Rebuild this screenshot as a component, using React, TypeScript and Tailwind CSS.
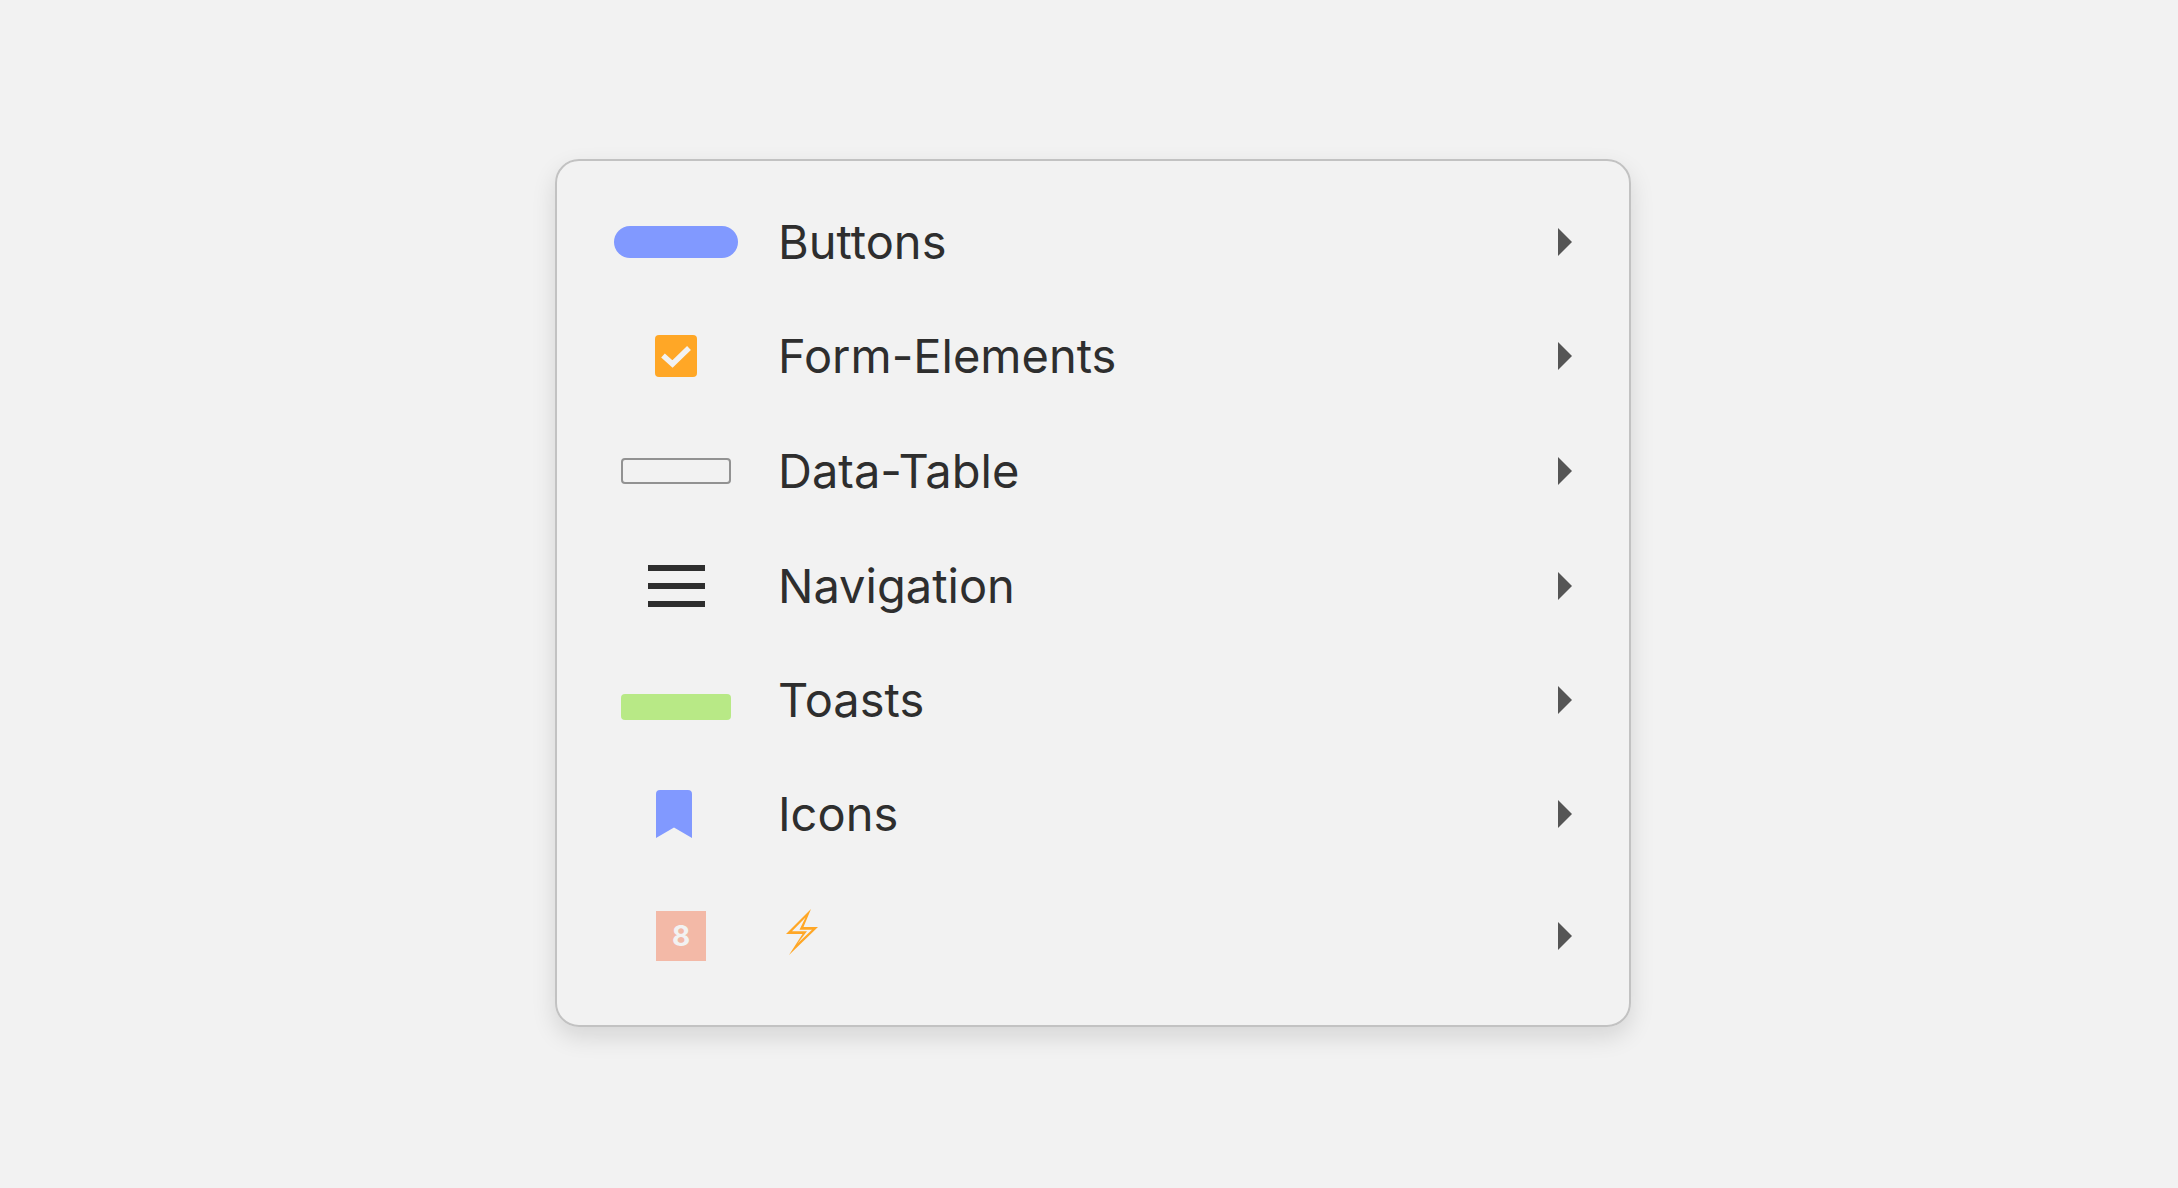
import React from 'react';

interface MenuItem {
	label: string;
	icon: React.ReactNode;
	content?: React.ReactNode;
	rowClass?: string;
}

const CheckIcon = () => (
	<svg width="42" height="42" viewBox="0 0 42 42" aria-hidden="true">
		<rect width="42" height="42" rx="4" fill="#ffa726" />
		<path d="M8 20.5L17.5 29L34 13" fill="none" stroke="#f2f2f2" strokeWidth="5.5" />
	</svg>
);

const MenuIcon = () => (
	<svg width="57" height="42" viewBox="0 0 57 42" fill="#2e2e2e" aria-hidden="true">
		<rect width="57" height="6" />
		<rect y="18" width="57" height="6" />
		<rect y="36" width="57" height="6" />
	</svg>
);

const BookmarkIcon = () => (
	<svg width="40" height="48" viewBox="0 0 40 48" fill="#8199ff" aria-hidden="true">
		<path d="M0 48V4a4 4 0 0 1 4-4h28a4 4 0 0 1 4 4v44L18 37.5z" />
	</svg>
);

const BoltIcon = () => (
	<svg width="44" height="56" viewBox="0 0 44 56" fill="#ffa726" aria-hidden="true">
		<path
			fillRule="evenodd"
			d="M33 1L8 26H24.5L11 47L40 19H25.5zM27.5 9.5L14 23.300H29L19.500 35.500L34 21.700H21.500z"
		/>
	</svg>
);

const Arrow = () => (
	<svg width="14" height="28" viewBox="0 0 14 28" fill="#555555" aria-hidden="true">
		<path d="M0 0L14 14L0 28z" />
	</svg>
);

const items: MenuItem[] = [
	{ label: 'Buttons', icon: <span className="h-8 w-full rounded-full bg-[#8199ff]" /> },
	{ label: 'Form-Elements', icon: <CheckIcon /> },
	{
		label: 'Data-Table',
		icon: <span className="h-[26px] w-[110px] rounded border-2 border-[#929292]" />,
		rowClass: 'h-[116px]',
	},
	{ label: 'Navigation', icon: <MenuIcon /> },
	{
		label: 'Toasts',
		icon: (
			<span className="flex h-10 items-end">
				<span className="h-[26px] w-[110px] rounded bg-[#b8e986]" />
			</span>
		),
	},
	{ label: 'Icons', icon: <BookmarkIcon /> },
	{
		label: 'Power',
		icon: (
			<span className="ml-2.5 flex size-[50px] items-center justify-center bg-[#f3b9a7] text-[28px] font-bold text-[#f2f2f2]">
				8
			</span>
		),
		content: <BoltIcon />,
		rowClass: 'h-[130px]',
	},
];

const MenuRow: React.FC<{ item: MenuItem }> = ({ item }) => (
	<li>
		<button
			type="button"
			aria-label={item.content ? item.label : undefined}
			className={`flex w-full items-center gap-10 px-[57px] text-left ${item.rowClass ?? 'h-[114px]'}`}
		>
			<span className="flex w-[124px] shrink-0 items-center justify-center">{item.icon}</span>
			<span className="grow">{item.content ?? item.label}</span>
			<Arrow />
		</button>
	</li>
);

const App: React.FC = () => (
	<main className="flex min-h-screen items-center justify-center bg-[#f2f2f2] pb-0.5 pl-2 font-['Inter',sans-serif] text-[47px] leading-[60px] text-[#2e2e2e]">
		<ul className="w-full max-w-[1076px] rounded-3xl border-2 border-[#c2c2c2] py-6 shadow-[0_10px_24px_rgba(0,0,0,0.12)]">
			{items.map((item) => (
				<MenuRow key={item.label} item={item} />
			))}
		</ul>
	</main>
);

export default App;
